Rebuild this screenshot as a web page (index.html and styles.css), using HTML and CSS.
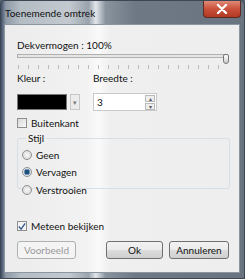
FILE: index.html
```html
<!DOCTYPE html>
<html lang="nl">

<head>
    <meta charset="UTF-8">
    <meta name="viewport" content="width=device-width, initial-scale=1.0">
    <title>Toenemende omtrek</title>
    <link rel="stylesheet" href="styles.css">
</head>

<body>
    <div class="window">
        <div class="title-bar">
            <span class="title">Toenemende omtrek</span>
            <button class="close-btn">
                <svg width="12" height="10" viewBox="0 0 12 10">
                    <path d="M2 1 L10 9 M10 1 L2 9" stroke="#fff" stroke-width="2.4" stroke-linecap="round"/>
                </svg>
            </button>
        </div>

        <div class="client">
            <div class="label">Dekvermogen : 100%</div>
            <div class="slider">
                <div class="track"></div>
                <div class="thumb"></div>
            </div>
            <div class="ticks"></div>

            <div class="row">
                <div class="field color-field">
                    <div class="label">Kleur :</div>
                    <div class="color-picker">
                        <div class="swatch"></div>
                        <div class="drop-btn">&#9662;</div>
                    </div>
                </div>
                <div class="field">
                    <div class="label">Breedte :</div>
                    <div class="spin">
                        <div class="spin-value">3</div>
                        <div class="spin-btns">
                            <div class="spin-btn">&#9652;</div>
                            <div class="spin-btn">&#9662;</div>
                        </div>
                    </div>
                </div>
            </div>

            <label class="check">
                <span class="box"></span>
                <span>Buitenkant</span>
            </label>

            <fieldset class="group">
                <legend>Stijl</legend>
                <div class="radio"><span class="dot"></span>Geen</div>
                <div class="radio"><span class="dot selected"></span>Vervagen</div>
                <div class="radio"><span class="dot"></span>Verstrooien</div>
            </fieldset>

            <label class="check preview-check">
                <span class="box checked">
                    <svg width="9" height="9" viewBox="0 0 9 9">
                        <path d="M1 4.5 L3.5 7.5 L8 1" fill="none" stroke="#3a5a8c" stroke-width="1.6"/>
                    </svg>
                </span>
                <span>Meteen bekijken</span>
            </label>

            <div class="buttons">
                <button class="btn disabled preview-btn">Voorbeeld</button>
                <div class="right-btns">
                    <button class="btn ok-btn">Ok</button>
                    <button class="btn cancel-btn">Annuleren</button>
                </div>
            </div>
        </div>
    </div>
</body>

</html>
```

FILE: styles.css
```css
* {
    margin: 0;
    padding: 0;
    box-sizing: border-box;
    font-family: Lato, "Noto Sans", sans-serif;
}

body {
    width: 245px;
    height: 279px;
    overflow: hidden;
    background: #55616e;
}

.window {
    width: 245px;
    height: 279px;
    display: flex;
    flex-direction: column;
    background: linear-gradient(90deg, #3f5068 0, #8f9aa6 2%, #b4bcc4 8%, #c3c9cf 28%, #9aa3ad 36%, #e2e6ea 39%, #8a949f 43%, #6f7985 55%, #6a7480 100%);
    border: 1px solid #3d4753;
    border-radius: 5px 5px 0 0;
}

.title-bar {
    height: 23px;
    display: flex;
    justify-content: space-between;
    align-items: flex-start;
    padding-left: 4px;
}

.title {
    font-size: 10px;
    color: #111;
    margin-top: 6px;
}

.close-btn {
    width: 38px;
    height: 17px;
    margin-right: 3px;
    border: 1px solid #5b2a22;
    border-top: none;
    border-radius: 0 0 4px 4px;
    background: linear-gradient(#e08a78, #c9503a 50%, #b13a25);
    display: flex;
    align-items: center;
    justify-content: center;
}

.client {
    flex: 1;
    margin: 0 4px 5px 3px;
    background: linear-gradient(90deg, #ececec, #f2f2f2 35%, #fafafa 40%, #efefef 45%, #eeeeee);
    border: 1px solid #8b96a2;
    padding: 14px 9px 0 12px;
    font-size: 10px;
    color: #111;
}

.label {
    line-height: 12px;
}

.slider {
    position: relative;
    height: 10px;
    margin-top: 1px;
}

.track {
    height: 4px;
    margin-top: 3px;
    border: 1px solid #b0b0b0;
    background: #e6e6e6;
    margin-right: 2px;
}

.thumb {
    position: absolute;
    right: 1px;
    top: 0;
    width: 6px;
    height: 10px;
    border: 1px solid #777;
    border-radius: 2px 2px 3px 3px;
    background: linear-gradient(#fff, #ccc);
}

.ticks {
    height: 4px;
    margin: 1px 2px 0 1px;
    background: repeating-linear-gradient(90deg, #bbb 0 1px, transparent 1px 10px);
}

.row {
    display: flex;
    gap: 12px;
    margin-top: 3px;
}

.field .label {
    margin-bottom: 10px;
}

.color-field {
    width: 64px;
}

.color-picker {
    display: flex;
    gap: 3px;
    height: 16px;
}

.swatch {
    width: 50px;
    background: #000;
    border: 1px solid #777;
}

.drop-btn {
    width: 10px;
    border: 1px solid #c8c8c8;
    background: #ececec;
    font-size: 7px;
    color: #777;
    text-align: center;
    line-height: 14px;
}

.spin {
    display: flex;
    width: 64px;
    height: 18px;
    margin-top: -1px;
    border: 1px solid #c9c9c9;
    background: #fff;
}

.spin-value {
    flex: 1;
    padding-left: 3px;
    line-height: 16px;
}

.spin-btns {
    width: 10px;
    display: flex;
    flex-direction: column;
    gap: 1px;
    margin: 1px;
}

.spin-btn {
    flex: 1;
    border: 1px solid #b9b9b9;
    background: #eee;
    font-size: 6px;
    line-height: 5px;
    color: #555;
    text-align: center;
}

.check {
    display: flex;
    align-items: center;
    gap: 4px;
    margin-top: 6px;
}

.box {
    width: 10px;
    height: 10px;
    border: 1px solid #8e8f8f;
    background: linear-gradient(135deg, #d8d8d8, #f8f8f8);
    display: flex;
    align-items: center;
    justify-content: center;
}

.group {
    margin-top: 3px;
    width: 213px;
    height: 57px;
    border: 1px solid #d5dfe5;
    border-radius: 3px;
    padding: 2px 0 0 4px;
}

.group legend {
    margin-left: 4px;
    padding: 0 2px;
}

.radio {
    display: flex;
    align-items: center;
    gap: 4px;
    height: 17.5px;
}

.dot {
    width: 10px;
    height: 10px;
    border-radius: 50%;
    border: 1px solid #8e8f8f;
    background: radial-gradient(#f6f6f6, #d4d4d4);
}

.dot.selected {
    background: radial-gradient(circle, #1f4e78 0 2px, #6c93b8 2.5px 3px, #e4e8ec 3.5px);
}

.preview-check {
    margin-top: 31px;
}

.box.checked {
    background: #f4f4f4;
}

.buttons {
    display: flex;
    justify-content: space-between;
    margin-top: 9px;
    padding-right: 1px;
}

.right-btns {
    display: flex;
    gap: 6px;
}

.btn {
    height: 18px;
    font-size: 10px;
    color: #111;
    border: 1px solid #707070;
    border-radius: 3px;
    background: linear-gradient(#f2f2f2, #ebebeb 50%, #dddddd 51%, #cfcfcf);
}

.preview-btn {
    width: 59px;
}

.ok-btn {
    width: 57px;
}

.cancel-btn {
    width: 60px;
}

.btn.disabled {
    color: #9a9a9a;
    border-color: #adb2b5;
    background: #f4f4f4;
}
```
